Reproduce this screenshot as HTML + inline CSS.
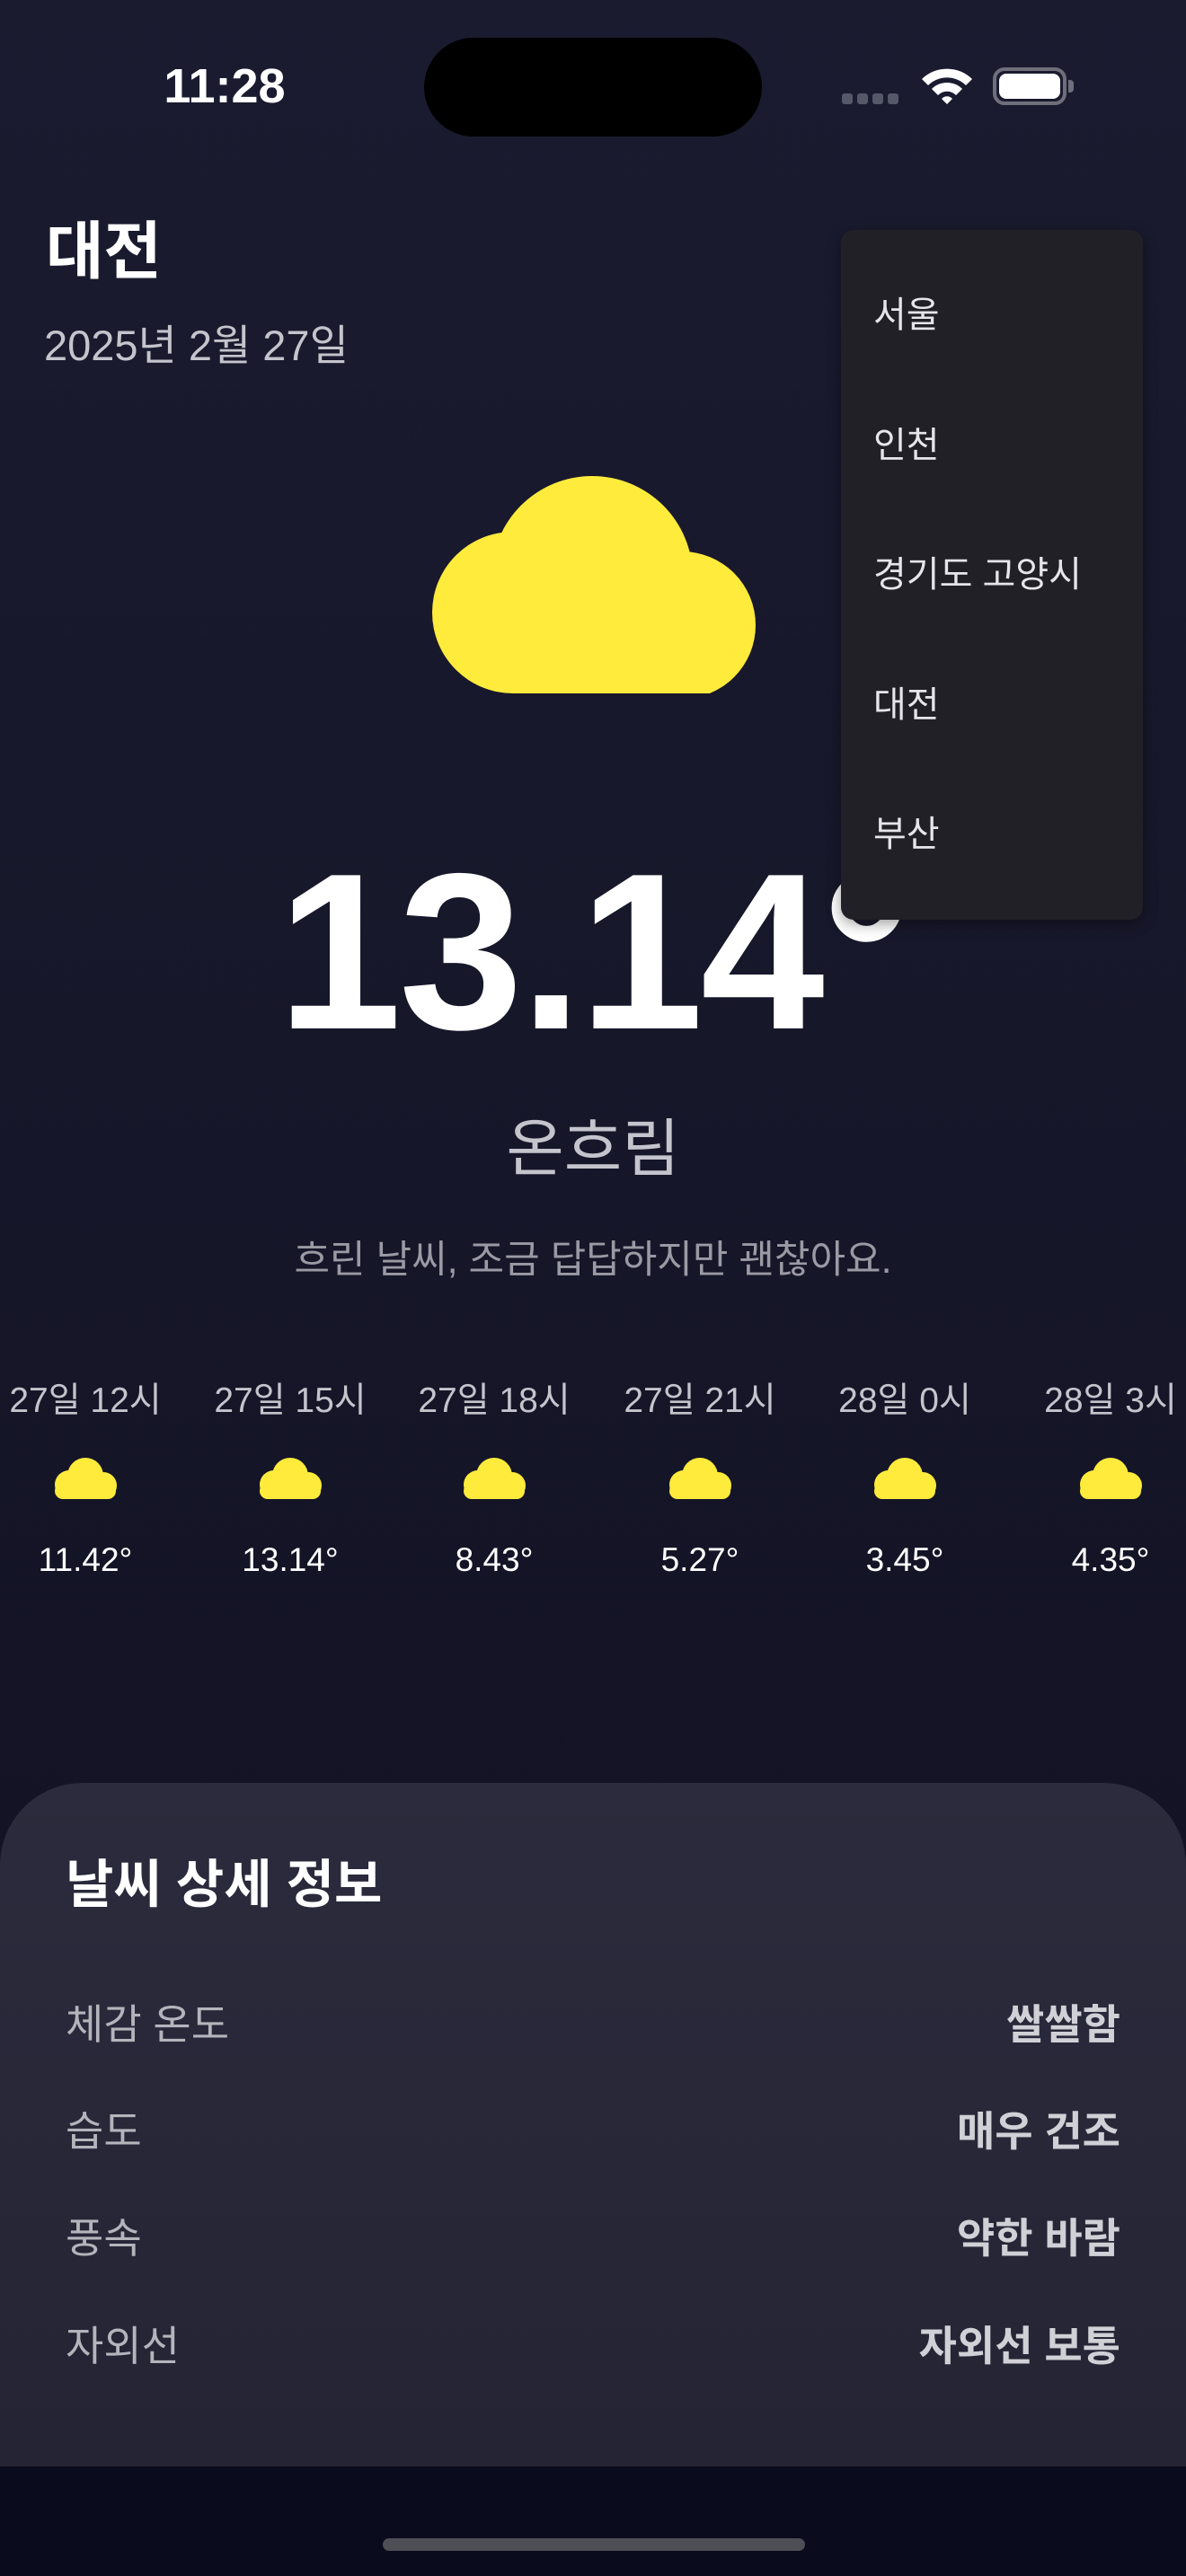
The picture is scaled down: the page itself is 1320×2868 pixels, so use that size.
<!DOCTYPE html>
<html><head><meta charset="utf-8">
<style>
*{margin:0;padding:0;box-sizing:border-box}
html,body{width:1320px;height:2868px;overflow:hidden}
body{position:relative;background:linear-gradient(180deg,#1b1b30 0%,#161629 50%,#0f0f20 100%);font-family:"Liberation Sans","Noto Sans CJK KR",sans-serif;color:#fff}
.abs{position:absolute}
.c{text-align:center}
</style></head><body>
<div class="abs" style="left:150px;top:64px;width:200px;font-size:54px;font-weight:bold;text-align:center;line-height:64px">11:28</div>
<div class="abs" style="left:472px;top:42px;width:376px;height:110px;border-radius:55px;background:#000"></div>
<div class="abs" style="left:937px;top:104px;width:64px;height:12px;display:flex;gap:5px">
<span style="width:12px;height:12px;border-radius:3px;background:#555868"></span><span style="width:12px;height:12px;border-radius:3px;background:#555868"></span><span style="width:12px;height:12px;border-radius:3px;background:#555868"></span><span style="width:12px;height:12px;border-radius:3px;background:#555868"></span></div>
<svg class="abs" style="left:1024px;top:74px" width="60" height="44" viewBox="0 0 60 44">
<path d="M2 14 A40 40 0 0 1 58 14 L51 21 A30 30 0 0 0 9 21 Z" fill="#fff"/>
<path d="M13 25 A24 24 0 0 1 47 25 L40 32 A14 14 0 0 0 20 32 Z" fill="#fff"/>
<path d="M24 36 A8 8 0 0 1 36 36 L30 42 Z" fill="#fff"/></svg>
<div class="abs" style="left:1105px;top:75px;width:82px;height:42px;border:4px solid #6f6f7c;border-radius:13px"></div>
<div class="abs" style="left:1112px;top:82px;width:68px;height:28px;background:#fff;border-radius:8px"></div>
<div class="abs" style="left:1189px;top:89px;width:6px;height:14px;background:#6f6f7c;border-radius:0 4px 4px 0"></div>

<div class="abs" style="left:51px;top:238px;font-size:70px;font-weight:bold;line-height:84px">대전</div>
<div class="abs" style="left:49px;top:356px;font-size:47px;color:#c4c4cc;line-height:58px">2025년 2월 27일</div>

<svg class="abs" style="left:479px;top:530px" width="362" height="242" viewBox="0 0 362 242">
<g fill="#ffeb3b"><circle cx="180" cy="112" r="112"/><circle cx="92" cy="152" r="90"/><circle cx="280" cy="166" r="82"/><rect x="92" y="130" width="188" height="112"/><rect x="60" y="190" width="240" height="52" rx="40"/></g></svg>

<div class="abs c" style="left:0;top:919px;width:1320px;font-size:248px;font-weight:bold;line-height:280px;letter-spacing:-3px">13.14°</div>

<div class="abs" style="left:936px;top:256px;width:336px;height:768px;background:#212027;border-radius:14px;box-shadow:0 4px 16px rgba(0,0,0,.4)">
<div class="abs" style="left:36px;top:70px;font-size:40px;line-height:50px;color:#e6e6ea">서울</div>
<div class="abs" style="left:36px;top:215px;font-size:40px;line-height:50px;color:#e6e6ea">인천</div>
<div class="abs" style="left:36px;top:359px;font-size:40px;line-height:50px;color:#e6e6ea">경기도 고양시</div>
<div class="abs" style="left:36px;top:504px;font-size:40px;line-height:50px;color:#e6e6ea">대전</div>
<div class="abs" style="left:36px;top:648px;font-size:40px;line-height:50px;color:#e6e6ea">부산</div>
</div>

<div class="abs c" style="left:0;top:1237px;width:1320px;font-size:70px;color:#c4c4cc;line-height:84px">온흐림</div>
<div class="abs c" style="left:0;top:1376px;width:1320px;font-size:43px;color:#9a9aa4;line-height:54px">흐린 날씨, 조금 답답하지만 괜찮아요.</div>

<div class="abs" style="left:0;top:1535px;width:1320px;height:240px;font-size:39px;color:#c4c4cc;line-height:50px">
<div class="abs c" style="left:-15px;width:220px">27일 12시</div>
<div class="abs c" style="left:213px;width:220px">27일 15시</div>
<div class="abs c" style="left:440px;width:220px">27일 18시</div>
<div class="abs c" style="left:669px;width:220px">27일 21시</div>
<div class="abs c" style="left:897px;width:220px">28일 0시</div>
<div class="abs c" style="left:1126px;width:220px">28일 3시</div>
</div>
<svg class="abs" style="left:0;top:1621px" width="1320" height="52">
<defs><g id="cl" fill="#ffeb3b"><circle cx="36" cy="22" r="20"/><circle cx="18" cy="32" r="16"/><circle cx="56" cy="33" r="15"/><rect x="2" y="30" width="68" height="18" rx="9"/></g></defs>
<use href="#cl" x="59"/><use href="#cl" x="287"/><use href="#cl" x="514"/><use href="#cl" x="743"/><use href="#cl" x="971"/><use href="#cl" x="1200"/></svg>
<div class="abs" style="left:0;top:1712px;width:1320px;font-size:37px;line-height:50px">
<span class="abs c" style="left:-15px;width:220px">11.42°</span>
<span class="abs c" style="left:213px;width:220px">13.14°</span>
<span class="abs c" style="left:440px;width:220px">8.43°</span>
<span class="abs c" style="left:669px;width:220px">5.27°</span>
<span class="abs c" style="left:897px;width:220px">3.45°</span>
<span class="abs c" style="left:1126px;width:220px">4.35°</span>
</div>

<div class="abs" style="left:0;top:2746px;width:1320px;height:122px;background:#0b0b1e"></div>
<div class="abs" style="left:0;top:1985px;width:1320px;height:761px;background:linear-gradient(180deg,#2b2b3d,#242434);border-radius:92px 92px 0 0">
<div class="abs" style="left:73px;top:80px;font-size:58px;font-weight:bold;line-height:68px">날씨 상세 정보</div>
<div class="abs" style="left:73px;top:241px;width:1174px;font-size:46px;line-height:56px;color:#b4b4bc">
<div style="position:absolute;top:0;left:0">체감 온도</div><div style="position:absolute;top:0;right:0;font-weight:bold;color:#d0d0d6">쌀쌀함</div>
<div style="position:absolute;top:119px;left:0">습도</div><div style="position:absolute;top:119px;right:0;font-weight:bold;color:#d0d0d6">매우 건조</div>
<div style="position:absolute;top:238px;left:0">풍속</div><div style="position:absolute;top:238px;right:0;font-weight:bold;color:#d0d0d6">약한 바람</div>
<div style="position:absolute;top:358px;left:0">자외선</div><div style="position:absolute;top:358px;right:0;font-weight:bold;color:#d0d0d6">자외선 보통</div>
</div></div>
<div class="abs" style="left:426px;top:2826px;width:470px;height:14px;border-radius:7px;background:#4e4e56"></div>
</body></html>
